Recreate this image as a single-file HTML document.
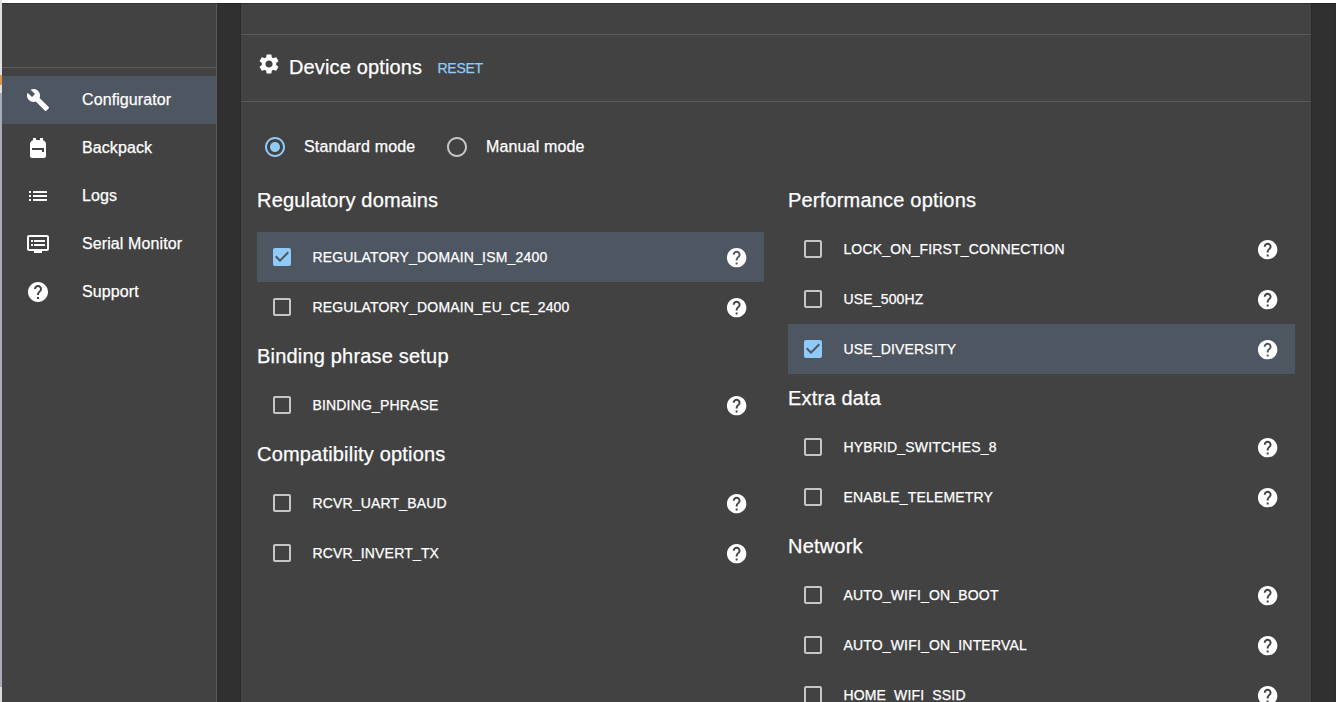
<!DOCTYPE html>
<html><head><meta charset="utf-8">
<style>
*{box-sizing:border-box;margin:0;padding:0}
html,body{width:1336px;height:702px;overflow:hidden;background:#303030;font-family:"Liberation Sans",sans-serif;color:#fff;-webkit-text-stroke:0.25px currentColor}
.abs{position:absolute}
#topbar{left:0;top:0;width:1336px;height:3px;background:#fff}
#topline{left:2px;top:3px;width:1334px;height:1px;background:rgba(0,0,0,0.22)}
#lstrip{left:0;top:0;width:2px;height:702px;background:#e0e0e0}
#side{left:2px;top:3px;width:215px;height:699px;background:#424242;border-right:1px solid #5a5a5a}
.sdiv{left:2px;top:67px;width:214px;height:1px;background:#5a5a5a}
.sitem{left:2px;width:214px;height:48px;line-height:48px;font-size:16px;letter-spacing:0.1px}
.sitem.sel{background:#4e5661}
.sitem svg{position:absolute;left:24px;top:12px;width:24px;height:24px;fill:#fff}
.sitem span{position:absolute;left:80px;top:0}
#card{left:241px;top:3px;width:1070px;height:699px;background:#424242}
.cdiv{left:241px;width:1070px;height:1px;background:#5a5a5a}
.t20{font-size:20px;letter-spacing:0.14px}
.t16{font-size:16px;letter-spacing:0.15px}
.row{height:50px;width:507px;line-height:50px;font-size:14px;letter-spacing:0.18px}
.row.sel{background:#4e5661}
.row .cb{position:absolute;left:13px;top:13px;width:24px;height:24px}
.row .lbl{position:absolute;left:55.4px;top:0}
.row .hp{position:absolute;left:467.85px;top:13.6px;width:23.3px;height:23.3px;fill:#fff}
.head{font-size:20px;height:30px;line-height:30px;letter-spacing:0.19px}
</style></head><body>
<div class="abs" id="topbar"></div>
<div class="abs" id="lstrip"></div>
<div class="abs" style="left:0;top:75px;width:2px;height:10px;background:#e0984a"></div>
<div class="abs" style="left:0;top:93px;width:2px;height:594px;background:#a9abb6"></div>
<div class="abs" style="left:0;top:687px;width:2px;height:15px;background:#dcdcdc"></div>
<div class="abs" id="side"></div>
<div class="abs sdiv"></div>
<div class="abs" id="card"></div>
<div class="abs" style="left:240px;top:3px;width:1px;height:699px;background:rgba(0,0,0,0.08)"></div>
<div class="abs" style="left:1311px;top:3px;width:1px;height:699px;background:rgba(0,0,0,0.08)"></div>
<div class="abs" style="left:1335px;top:3px;width:1px;height:699px;background:rgba(0,0,0,0.06)"></div>
<div class="abs" id="topline"></div>

<!-- sidebar items -->
<div class="abs sitem sel" style="top:76px"><svg viewBox="0 0 24 24"><path d="M22.7 19l-9.1-9.1c.9-2.3.4-5-1.5-6.9-2-2-5-2.4-7.4-1.3L9 6 6 9 1.6 4.7C.4 7.1.9 10.1 2.9 12.1c1.9 1.9 4.6 2.4 6.9 1.5l9.1 9.1c.4.4 1 .4 1.4 0l2.3-2.3c.5-.4.5-1.1.1-1.4z"/></svg><span>Configurator</span></div>
<div class="abs sitem" style="top:124px"><svg viewBox="0 0 24 24"><path d="M20 8v12c0 1.1-.9 2-2 2H6c-1.1 0-2-.9-2-2V8c0-1.86 1.28-3.41 3-3.86V2h3v2h4V2h3v2.14c1.72.45 3 2 3 3.86zM6 12v2h10v2h2v-4H6z"/></svg><span>Backpack</span></div>
<div class="abs sitem" style="top:172px"><svg viewBox="0 0 24 24"><path d="M3 13h2v-2H3v2zm0 4h2v-2H3v2zm0-8h2V7H3v2zm4 4h14v-2H7v2zm0 4h14v-2H7v2zM7 7v2h14V7H7z"/></svg><span>Logs</span></div>
<div class="abs sitem" style="top:220px"><svg viewBox="0 0 24 24"><path d="M21 3H3c-1.1 0-2 .9-2 2v12c0 1.1.9 2 2 2h5v2h8v-2h5c1.1 0 1.99-.9 1.99-2L23 5c0-1.1-.9-2-2-2zm0 14H3V5h18v12zm-2-9H8v2h11V8zm0 4H8v2h11v-2zM7 8H5v2h2V8zm0 4H5v2h2v-2z"/></svg><span>Serial Monitor</span></div>
<div class="abs sitem" style="top:268px"><svg viewBox="0 0 24 24"><path d="M12 2C6.48 2 2 6.48 2 12s4.48 10 10 10 10-4.48 10-10S17.52 2 12 2zm1 17h-2v-2h2v2zm2.07-7.75l-.9.92C13.45 12.9 13 13.5 13 15h-2v-.5c0-1.1.45-2.1 1.17-2.83l1.24-1.26c.37-.36.59-.86.59-1.41 0-1.1-.9-2-2-2s-2 .9-2 2H8c0-2.21 1.79-4 4-4s4 1.79 4 4c0 .88-.36 1.68-.93 2.25z"/></svg><span>Support</span></div>

<!-- card header -->
<div class="abs cdiv" style="top:34px"></div>
<div class="abs cdiv" style="top:101px"></div>
<svg class="abs" style="left:257px;top:52px;width:24px;height:24px;fill:#fff" viewBox="0 0 24 24"><path d="M19.14 12.94c.04-.3.06-.61.06-.94 0-.32-.02-.64-.07-.94l2.03-1.58c.18-.14.23-.41.12-.61l-1.92-3.32c-.12-.22-.37-.29-.59-.22l-2.39.96c-.5-.38-1.03-.7-1.62-.94l-.36-2.54c-.04-.24-.24-.41-.48-.41h-3.84c-.24 0-.43.17-.47.41l-.36 2.54c-.59.24-1.13.57-1.62.94l-2.39-.96c-.22-.08-.47 0-.59.22L2.74 8.87c-.12.21-.08.47.12.61l2.03 1.58c-.05.3-.09.63-.09.94s.02.64.07.94l-2.030 1.58c-.18.14-.23.41-.12.61l1.92 3.32c.12.22.37.29.59.22l2.39-.96c.5.38 1.03.7 1.62.94l.36 2.54c.05.24.24.41.48.41h3.84c.24 0 .44-.17.47-.41l.36-2.54c.59-.24 1.13-.56 1.62-.94l2.39.96c.22.08.47 0 .59-.22l1.92-3.32c.12-.22.07-.47-.12-.61l-2.01-1.58zM12 15.6c-1.98 0-3.6-1.62-3.6-3.6s1.62-3.6 3.6-3.6 3.6 1.62 3.6 3.6-1.62 3.6-3.6 3.6z"/></svg>
<div class="abs t20" style="left:289px;top:52px;line-height:30px">Device options</div>
<div class="abs" style="left:437.5px;top:53px;line-height:30px;font-size:14px;letter-spacing:-0.25px;color:#90caf9">RESET</div>

<!-- radios -->
<svg class="abs" style="left:263px;top:135px;width:24px;height:24px;fill:#90caf9" viewBox="0 0 24 24"><path d="M12 7c-2.76 0-5 2.24-5 5s2.24 5 5 5 5-2.24 5-5-2.24-5-5-5zm0-5C6.48 2 2 6.48 2 12s4.48 10 10 10 10-4.48 10-10S17.52 2 12 2zm0 18c-4.42 0-8-3.58-8-8s3.58-8 8-8 8 3.58 8 8-3.58 8-8 8z"/></svg>
<div class="abs t16" style="left:304px;top:132px;line-height:30px">Standard mode</div>
<svg class="abs" style="left:445px;top:135px;width:24px;height:24px;fill:#c6c6c6" viewBox="0 0 24 24"><path d="M12 2C6.48 2 2 6.48 2 12s4.48 10 10 10 10-4.48 10-10S17.52 2 12 2zm0 18c-4.42 0-8-3.58-8-8s3.58-8 8-8 8 3.58 8 8-3.58 8-8 8z"/></svg>
<div class="abs t16" style="left:486px;top:132px;line-height:30px">Manual mode</div>

<div id="content"><div class="abs head" style="left:257px;top:185.07px">Regulatory domains</div>
<div class="abs row sel" style="left:257px;top:232px"><svg class="cb" viewBox="0 0 24 24" fill="#90caf9"><path d="M19 3H5c-1.11 0-2 .9-2 2v14c0 1.1.89 2 2 2h14c1.11 0 2-.9 2-2V5c0-1.1-.89-2-2-2zm-9 14l-5-5 1.41-1.41L10 14.17l7.59-7.59L19 8l-9 9z"/></svg><span class="lbl">REGULATORY_DOMAIN_ISM_2400</span><svg class="hp" viewBox="0 0 24 24"><path d="M12 2C6.48 2 2 6.48 2 12s4.48 10 10 10 10-4.48 10-10S17.52 2 12 2zm1 17h-2v-2h2v2zm2.07-7.75l-.9.92C13.45 12.9 13 13.5 13 15h-2v-.5c0-1.1.45-2.1 1.17-2.83l1.24-1.26c.37-.36.59-.86.59-1.41 0-1.1-.9-2-2-2s-2 .9-2 2H8c0-2.21 1.79-4 4-4s4 1.79 4 4c0 .88-.36 1.68-.93 2.25z"/></svg></div>
<div class="abs row" style="left:257px;top:282px"><svg class="cb" viewBox="0 0 24 24" fill="#c6c6c6"><path d="M19 5v14H5V5h14m0-2H5c-1.1 0-2 .9-2 2v14c0 1.1.9 2 2 2h14c1.1 0 2-.9 2-2V5c0-1.1-.9-2-2-2z"/></svg><span class="lbl">REGULATORY_DOMAIN_EU_CE_2400</span><svg class="hp" viewBox="0 0 24 24"><path d="M12 2C6.48 2 2 6.48 2 12s4.48 10 10 10 10-4.48 10-10S17.52 2 12 2zm1 17h-2v-2h2v2zm2.07-7.75l-.9.92C13.45 12.9 13 13.5 13 15h-2v-.5c0-1.1.45-2.1 1.17-2.83l1.24-1.26c.37-.36.59-.86.59-1.41 0-1.1-.9-2-2-2s-2 .9-2 2H8c0-2.21 1.79-4 4-4s4 1.79 4 4c0 .88-.36 1.68-.93 2.25z"/></svg></div>
<div class="abs head" style="left:257px;top:341.07px">Binding phrase setup</div>
<div class="abs row" style="left:257px;top:380px"><svg class="cb" viewBox="0 0 24 24" fill="#c6c6c6"><path d="M19 5v14H5V5h14m0-2H5c-1.1 0-2 .9-2 2v14c0 1.1.9 2 2 2h14c1.1 0 2-.9 2-2V5c0-1.1-.9-2-2-2z"/></svg><span class="lbl">BINDING_PHRASE</span><svg class="hp" viewBox="0 0 24 24"><path d="M12 2C6.48 2 2 6.48 2 12s4.48 10 10 10 10-4.48 10-10S17.52 2 12 2zm1 17h-2v-2h2v2zm2.07-7.75l-.9.92C13.45 12.9 13 13.5 13 15h-2v-.5c0-1.1.45-2.1 1.17-2.83l1.24-1.26c.37-.36.59-.86.59-1.41 0-1.1-.9-2-2-2s-2 .9-2 2H8c0-2.21 1.79-4 4-4s4 1.79 4 4c0 .88-.36 1.68-.93 2.25z"/></svg></div>
<div class="abs head" style="left:257px;top:439.07px">Compatibility options</div>
<div class="abs row" style="left:257px;top:478px"><svg class="cb" viewBox="0 0 24 24" fill="#c6c6c6"><path d="M19 5v14H5V5h14m0-2H5c-1.1 0-2 .9-2 2v14c0 1.1.9 2 2 2h14c1.1 0 2-.9 2-2V5c0-1.1-.9-2-2-2z"/></svg><span class="lbl">RCVR_UART_BAUD</span><svg class="hp" viewBox="0 0 24 24"><path d="M12 2C6.48 2 2 6.48 2 12s4.48 10 10 10 10-4.48 10-10S17.52 2 12 2zm1 17h-2v-2h2v2zm2.07-7.75l-.9.92C13.45 12.9 13 13.5 13 15h-2v-.5c0-1.1.45-2.1 1.17-2.83l1.24-1.26c.37-.36.59-.86.59-1.41 0-1.1-.9-2-2-2s-2 .9-2 2H8c0-2.21 1.79-4 4-4s4 1.79 4 4c0 .88-.36 1.68-.93 2.25z"/></svg></div>
<div class="abs row" style="left:257px;top:528px"><svg class="cb" viewBox="0 0 24 24" fill="#c6c6c6"><path d="M19 5v14H5V5h14m0-2H5c-1.1 0-2 .9-2 2v14c0 1.1.9 2 2 2h14c1.1 0 2-.9 2-2V5c0-1.1-.9-2-2-2z"/></svg><span class="lbl">RCVR_INVERT_TX</span><svg class="hp" viewBox="0 0 24 24"><path d="M12 2C6.48 2 2 6.48 2 12s4.48 10 10 10 10-4.48 10-10S17.52 2 12 2zm1 17h-2v-2h2v2zm2.07-7.75l-.9.92C13.45 12.9 13 13.5 13 15h-2v-.5c0-1.1.45-2.1 1.17-2.83l1.24-1.26c.37-.36.59-.86.59-1.41 0-1.1-.9-2-2-2s-2 .9-2 2H8c0-2.21 1.79-4 4-4s4 1.79 4 4c0 .88-.36 1.68-.93 2.25z"/></svg></div>
<div class="abs head" style="left:788px;top:185.07px">Performance options</div>
<div class="abs row" style="left:788px;top:224px"><svg class="cb" viewBox="0 0 24 24" fill="#c6c6c6"><path d="M19 5v14H5V5h14m0-2H5c-1.1 0-2 .9-2 2v14c0 1.1.9 2 2 2h14c1.1 0 2-.9 2-2V5c0-1.1-.9-2-2-2z"/></svg><span class="lbl">LOCK_ON_FIRST_CONNECTION</span><svg class="hp" viewBox="0 0 24 24"><path d="M12 2C6.48 2 2 6.48 2 12s4.48 10 10 10 10-4.48 10-10S17.52 2 12 2zm1 17h-2v-2h2v2zm2.07-7.75l-.9.92C13.45 12.9 13 13.5 13 15h-2v-.5c0-1.1.45-2.1 1.17-2.83l1.24-1.26c.37-.36.59-.86.59-1.41 0-1.1-.9-2-2-2s-2 .9-2 2H8c0-2.21 1.79-4 4-4s4 1.79 4 4c0 .88-.36 1.68-.93 2.25z"/></svg></div>
<div class="abs row" style="left:788px;top:274px"><svg class="cb" viewBox="0 0 24 24" fill="#c6c6c6"><path d="M19 5v14H5V5h14m0-2H5c-1.1 0-2 .9-2 2v14c0 1.1.9 2 2 2h14c1.1 0 2-.9 2-2V5c0-1.1-.9-2-2-2z"/></svg><span class="lbl">USE_500HZ</span><svg class="hp" viewBox="0 0 24 24"><path d="M12 2C6.48 2 2 6.48 2 12s4.48 10 10 10 10-4.48 10-10S17.52 2 12 2zm1 17h-2v-2h2v2zm2.07-7.75l-.9.92C13.45 12.9 13 13.5 13 15h-2v-.5c0-1.1.45-2.1 1.17-2.83l1.24-1.26c.37-.36.59-.86.59-1.41 0-1.1-.9-2-2-2s-2 .9-2 2H8c0-2.21 1.79-4 4-4s4 1.79 4 4c0 .88-.36 1.68-.93 2.25z"/></svg></div>
<div class="abs row sel" style="left:788px;top:324px"><svg class="cb" viewBox="0 0 24 24" fill="#90caf9"><path d="M19 3H5c-1.11 0-2 .9-2 2v14c0 1.1.89 2 2 2h14c1.11 0 2-.9 2-2V5c0-1.1-.89-2-2-2zm-9 14l-5-5 1.41-1.41L10 14.17l7.59-7.59L19 8l-9 9z"/></svg><span class="lbl">USE_DIVERSITY</span><svg class="hp" viewBox="0 0 24 24"><path d="M12 2C6.48 2 2 6.48 2 12s4.48 10 10 10 10-4.48 10-10S17.52 2 12 2zm1 17h-2v-2h2v2zm2.07-7.75l-.9.92C13.45 12.9 13 13.5 13 15h-2v-.5c0-1.1.45-2.1 1.17-2.83l1.24-1.26c.37-.36.59-.86.59-1.41 0-1.1-.9-2-2-2s-2 .9-2 2H8c0-2.21 1.79-4 4-4s4 1.79 4 4c0 .88-.36 1.68-.93 2.25z"/></svg></div>
<div class="abs head" style="left:788px;top:383.07px">Extra data</div>
<div class="abs row" style="left:788px;top:422px"><svg class="cb" viewBox="0 0 24 24" fill="#c6c6c6"><path d="M19 5v14H5V5h14m0-2H5c-1.1 0-2 .9-2 2v14c0 1.1.9 2 2 2h14c1.1 0 2-.9 2-2V5c0-1.1-.9-2-2-2z"/></svg><span class="lbl">HYBRID_SWITCHES_8</span><svg class="hp" viewBox="0 0 24 24"><path d="M12 2C6.48 2 2 6.48 2 12s4.48 10 10 10 10-4.48 10-10S17.52 2 12 2zm1 17h-2v-2h2v2zm2.07-7.75l-.9.92C13.45 12.9 13 13.5 13 15h-2v-.5c0-1.1.45-2.1 1.17-2.83l1.24-1.26c.37-.36.59-.86.59-1.41 0-1.1-.9-2-2-2s-2 .9-2 2H8c0-2.21 1.79-4 4-4s4 1.79 4 4c0 .88-.36 1.68-.93 2.25z"/></svg></div>
<div class="abs row" style="left:788px;top:472px"><svg class="cb" viewBox="0 0 24 24" fill="#c6c6c6"><path d="M19 5v14H5V5h14m0-2H5c-1.1 0-2 .9-2 2v14c0 1.1.9 2 2 2h14c1.1 0 2-.9 2-2V5c0-1.1-.9-2-2-2z"/></svg><span class="lbl">ENABLE_TELEMETRY</span><svg class="hp" viewBox="0 0 24 24"><path d="M12 2C6.48 2 2 6.48 2 12s4.48 10 10 10 10-4.48 10-10S17.52 2 12 2zm1 17h-2v-2h2v2zm2.07-7.75l-.9.92C13.45 12.9 13 13.5 13 15h-2v-.5c0-1.1.45-2.1 1.17-2.83l1.24-1.26c.37-.36.59-.86.59-1.41 0-1.1-.9-2-2-2s-2 .9-2 2H8c0-2.21 1.79-4 4-4s4 1.79 4 4c0 .88-.36 1.68-.93 2.25z"/></svg></div>
<div class="abs head" style="left:788px;top:531.07px">Network</div>
<div class="abs row" style="left:788px;top:570px"><svg class="cb" viewBox="0 0 24 24" fill="#c6c6c6"><path d="M19 5v14H5V5h14m0-2H5c-1.1 0-2 .9-2 2v14c0 1.1.9 2 2 2h14c1.1 0 2-.9 2-2V5c0-1.1-.9-2-2-2z"/></svg><span class="lbl">AUTO_WIFI_ON_BOOT</span><svg class="hp" viewBox="0 0 24 24"><path d="M12 2C6.48 2 2 6.48 2 12s4.48 10 10 10 10-4.48 10-10S17.52 2 12 2zm1 17h-2v-2h2v2zm2.07-7.75l-.9.92C13.45 12.9 13 13.5 13 15h-2v-.5c0-1.1.45-2.1 1.17-2.83l1.24-1.26c.37-.36.59-.86.59-1.41 0-1.1-.9-2-2-2s-2 .9-2 2H8c0-2.21 1.79-4 4-4s4 1.79 4 4c0 .88-.36 1.68-.93 2.25z"/></svg></div>
<div class="abs row" style="left:788px;top:620px"><svg class="cb" viewBox="0 0 24 24" fill="#c6c6c6"><path d="M19 5v14H5V5h14m0-2H5c-1.1 0-2 .9-2 2v14c0 1.1.9 2 2 2h14c1.1 0 2-.9 2-2V5c0-1.1-.9-2-2-2z"/></svg><span class="lbl">AUTO_WIFI_ON_INTERVAL</span><svg class="hp" viewBox="0 0 24 24"><path d="M12 2C6.48 2 2 6.48 2 12s4.48 10 10 10 10-4.48 10-10S17.52 2 12 2zm1 17h-2v-2h2v2zm2.07-7.75l-.9.92C13.45 12.9 13 13.5 13 15h-2v-.5c0-1.1.45-2.1 1.17-2.83l1.24-1.26c.37-.36.59-.86.59-1.41 0-1.1-.9-2-2-2s-2 .9-2 2H8c0-2.21 1.79-4 4-4s4 1.79 4 4c0 .88-.36 1.68-.93 2.25z"/></svg></div>
<div class="abs row" style="left:788px;top:670px"><svg class="cb" viewBox="0 0 24 24" fill="#c6c6c6"><path d="M19 5v14H5V5h14m0-2H5c-1.1 0-2 .9-2 2v14c0 1.1.9 2 2 2h14c1.1 0 2-.9 2-2V5c0-1.1-.9-2-2-2z"/></svg><span class="lbl">HOME_WIFI_SSID</span><svg class="hp" viewBox="0 0 24 24"><path d="M12 2C6.48 2 2 6.48 2 12s4.48 10 10 10 10-4.48 10-10S17.52 2 12 2zm1 17h-2v-2h2v2zm2.07-7.75l-.9.92C13.45 12.9 13 13.5 13 15h-2v-.5c0-1.1.45-2.1 1.17-2.83l1.24-1.26c.37-.36.59-.86.59-1.41 0-1.1-.9-2-2-2s-2 .9-2 2H8c0-2.21 1.79-4 4-4s4 1.79 4 4c0 .88-.36 1.68-.93 2.25z"/></svg></div></div><!--end-->
</body></html>
